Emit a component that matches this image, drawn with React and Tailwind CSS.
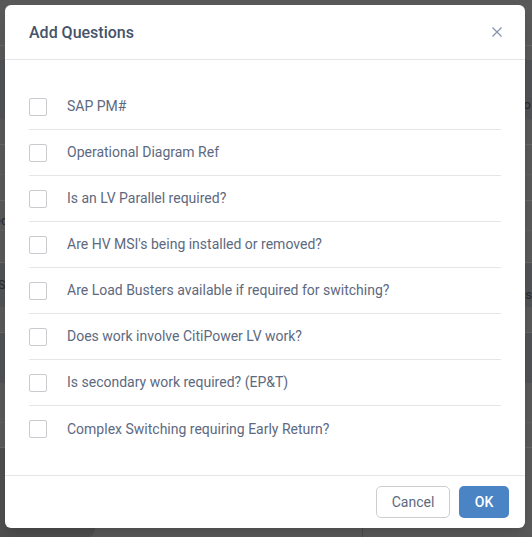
import React from "react";

const questions = [
  "SAP PM#",
  "Operational Diagram Ref",
  "Is an LV Parallel required?",
  "Are HV MSI's being installed or removed?",
  "Are Load Busters available if required for switching?",
  "Does work involve CitiPower LV work?",
  "Is secondary work required? (EP&T)",
  "Complex Switching requiring Early Return?",
];

function Backdrop() {
  // dimmed app behind the dialog
  return (
    <div className="flex flex-col h-[537px] bg-[#595959] text-[#2a2a2a] text-[13px]">
      <div className="h-[46px] border-b border-[#666]" />
      <div className="h-[14px]" />
      <div className="h-[60px] bg-[#4f5155] flex justify-end items-center pr-[1px] border-b border-[#555]">
        <span className="pt-[30px]">o</span>
      </div>
      <div className="h-[25px] border-b border-[#666]" />
      <div className="h-[30px] border-b border-[#5f5f5f]" />
      <div className="h-[26px] border-b border-[#666]" />
      <div className="h-[30px] border-b border-[#5f5f5f] flex items-end">
        <span className="-ml-[6px]">ed</span>
      </div>
      <div className="h-[32px] border-b border-[#666]" />
      <div className="h-[44px] bg-[#505256] flex items-center justify-between">
        <span className="-ml-[2px]">S</span>
        <span className="pt-[20px]">s</span>
      </div>
      <div className="h-[26px] border-b border-[#666]" />
      <div className="h-[50px] bg-[#4f5155]" />
      <div className="h-[40px] border-b border-[#5f5f5f]" />
      <div className="h-[25px] border-b border-[#666]" />
      <div className="flex-1 flex">
        <div className="w-[95px] bg-[#4e4e4e] rounded-br-lg" />
        <div className="flex-1" />
        <div className="w-[170px] border-l border-[#4a4a4a]" />
      </div>
    </div>
  );
}

export default function App() {
  return (
    <div className="relative w-[532px] h-[537px] overflow-hidden font-['Roboto','Liberation_Sans',sans-serif]">
      <Backdrop />
      <div className="absolute left-[5px] top-[5px] w-[520px] h-[523px] bg-white rounded-[6px] flex flex-col shadow-lg">
        <div className="h-[55px] px-6 flex items-center justify-between border-b border-[#e4e6ea]">
          <h2 className="text-[16px] font-medium text-[#46536a] pt-[1px]">Add Questions</h2>
          <button className="w-6 h-6 flex items-center justify-center -mr-[8px] text-[#8393ad]">
            <svg width="10" height="10" viewBox="0 0 10 10" fill="none" stroke="currentColor" strokeWidth="1.2">
              <path d="M0.5 0.5 L9.5 9.5 M9.5 0.5 L0.5 9.5" />
            </svg>
          </button>
        </div>
        <div className="flex-1 px-6 pt-6">
          {questions.map((q, i) => (
            <label
              key={q}
              className={`h-[46px] flex items-center gap-[20px] ${
                i < questions.length - 1 ? "border-b border-[#e4e6ea]" : ""
              }`}
            >
              <span className="w-[18px] h-[18px] border border-[#c9cbcf] rounded-[2px] bg-white shrink-0" />
              <span className="text-[14px] text-[#5d6980]">{q}</span>
            </label>
          ))}
        </div>
        <div className="h-[53px] border-t border-[#e4e6ea] flex items-center justify-end gap-[9px] pr-4">
          <button className="w-[74px] h-[32px] border border-[#ccced2] rounded-[5px] text-[14px] text-[#5d6980]">
            Cancel
          </button>
          <button className="w-[50px] h-[32px] bg-[#4a84c5] rounded-[5px] text-[14px] font-medium text-white">
            OK
          </button>
        </div>
      </div>
    </div>
  );
}
